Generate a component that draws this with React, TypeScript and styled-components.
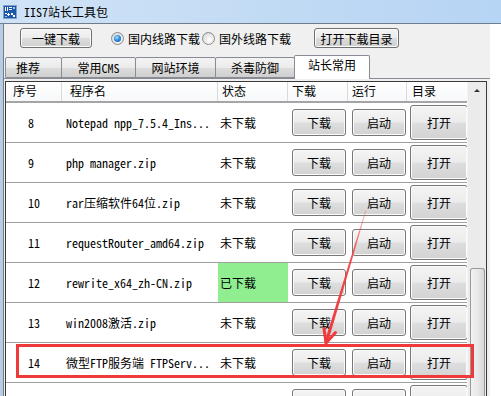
import React from 'react';
import styled, { createGlobalStyle } from 'styled-components';

const GlobalStyle = createGlobalStyle`
  html, body {
    margin: 0;
    padding: 0;
    background: #ffffff;
  }
  body {
    font-family: "Noto Sans Mono CJK SC", "Noto Sans CJK SC", "Liberation Mono", monospace;
    font-size: 12px;
    color: #000;
  }
  #root {
    width: 501px;
    height: 396px;
    overflow: hidden;
  }
`;

const Window = styled.div`
  position: relative;
  width: 501px;
  height: 396px;
  display: flex;
  flex-direction: column;
  overflow: hidden;
`;

const TitleBar = styled.div`
  height: 23px;
  flex: none;
  display: flex;
  align-items: center;
  gap: 7px;
  padding-left: 3px;
  background: linear-gradient(to right, #d0e3f6 0%, #c4dcf4 45%, #b6d4f4 100%);
  border-bottom: 1px solid #6e7e8e;
`;

const TitleText = styled.span`
  font-size: 12px;
  line-height: 14px;
  color: #000;
`;

const Body = styled.div`
  flex: 1;
  display: flex;
  min-height: 0;
`;

const Frame = styled.div`
  width: 3px;
  flex: none;
  background: #b9cde2;
  border-right: 1px solid #6e7e8e;
`;

const Content = styled.div`
  width: 486px;
  flex: none;
  background: #f0f0f0;
  padding-top: 4px;
  display: flex;
  flex-direction: column;
  min-height: 0;
`;

const Outside = styled.div`
  flex: 1;
  background: #ffffff;
`;

const Controls = styled.div`
  height: 20px;
  display: flex;
  align-items: center;
  padding-left: 16px;
  margin-bottom: 7px;
`;

const PushButton = styled.button<{ $w: number; $ml?: number }>`
  width: ${p => p.$w}px;
  height: 20px;
  margin-left: ${p => p.$ml ?? 0}px;
  padding: 0;
  font: inherit;
  color: #000;
  border: 1px solid #707070;
  border-radius: 3px;
  background: linear-gradient(#f4f4f4 0%, #ececec 48%, #dcdcdc 52%, #d0d0d0 100%);
  box-shadow: inset 0 0 0 1px #fbfbfb;
  display: flex;
  align-items: center;
  justify-content: center;
`;

const RadioLabel = styled.label<{ $ml: number }>`
  display: flex;
  align-items: center;
  gap: 4px;
  margin-left: ${p => p.$ml}px;
`;

const RadioDot = styled.span<{ $on?: boolean }>`
  width: 13px;
  height: 13px;
  box-sizing: border-box;
  border-radius: 50%;
  border: 1px solid #8a8a8a;
  background: radial-gradient(circle at 60% 65%, #ffffff 0%, #e6e6e6 55%, #cfcfcf 100%);
  display: flex;
  align-items: center;
  justify-content: center;
  &::after {
    content: '';
    display: ${p => (p.$on ? 'block' : 'none')};
    width: 7px;
    height: 7px;
    border-radius: 50%;
    background: radial-gradient(circle at 40% 35%, #a9e3ff 0%, #2f8ee0 45%, #0c4f9e 100%);
  }
`;

const TabStrip = styled.div`
  height: 23px;
  display: flex;
  align-items: flex-end;
  padding-left: 1px;
`;

const Tab = styled.div<{ $active?: boolean; $w: number; $left?: boolean }>`
  box-sizing: border-box;
  width: ${p => p.$w}px;
  flex: none;
  height: ${p => (p.$active ? 24 : 21)}px;
  margin-bottom: ${p => (p.$active ? -1 : 0)}px;
  margin-left: -1px;
  padding: ${p => (p.$active ? '2px 0 0' : '3px 0 0')};
  padding-left: ${p => (p.$left ? 10 : 0)}px;
  text-align: ${p => (p.$left ? 'left' : 'center')};
  border: 1px solid #898c95;
  border-bottom: ${p => (p.$active ? 'none' : '1px solid #898c95')};
  border-radius: 2px 2px 0 0;
  position: relative;
  z-index: ${p => (p.$active ? 1 : 0)};
  background: ${p =>
    p.$active ? '#ffffff' : 'linear-gradient(#f3f3f3 0%, #ebebeb 50%, #dddddd 52%, #cfcfcf 100%)'};
  line-height: 14px;
  white-space: nowrap;
  &:first-child {
    margin-left: 0;
  }
`;

const Panel = styled.div`
  flex: 1;
  min-height: 0;
  border-top: 1px solid #898c95;
  padding-top: 2px;
  display: flex;
  flex-direction: column;
`;

const Table = styled.div`
  flex: 1;
  min-height: 0;
  width: 482px;
  box-sizing: border-box;
  margin-left: 1px;
  border: 1px solid #3a3a3a;
  border-bottom: none;
  background: #ffffff;
  display: flex;
  overflow: hidden;
`;

const GridArea = styled.div`
  width: 462px;
  display: flex;
  flex-direction: column;
  overflow: hidden;
`;

const COLS = '56px 156px 70px 60px 59px 61px';

const HeaderRow = styled.div`
  display: grid;
  grid-template-columns: ${COLS};
  height: 19px;
  flex: none;
  border-bottom: 2px solid #a5a5a5;
  background: linear-gradient(#ffffff 0%, #f7f8fa 100%);
`;

const HeadCell = styled.div<{ $pad: number }>`
  padding-left: ${p => p.$pad}px;
  line-height: 18px;
  border-right: 1px solid #dadada;
  white-space: nowrap;
`;

const Row = styled.div`
  display: grid;
  grid-template-columns: ${COLS};
  height: 40px;
  flex: none;
  box-sizing: border-box;
  border-bottom: 1px solid #a0a0a0;
`;

const Cell = styled.div<{ $pad?: number; $done?: boolean }>`
  display: flex;
  align-items: center;
  padding-left: ${p => p.$pad ?? 0}px;
  background: ${p => (p.$done ? '#90ee90' : 'transparent')};
  white-space: nowrap;
  overflow: hidden;
`;

const RowButton = styled.div<{ $big?: boolean }>`
  box-sizing: border-box;
  width: ${p => (p.$big ? 58 : 54)}px;
  height: ${p => (p.$big ? 35 : 27)}px;
  border: 1px solid #777777;
  border-radius: 3px;
  background: linear-gradient(#f4f4f4 0%, #ececec 48%, #dedede 52%, #d2d2d2 100%);
  box-shadow: inset 0 0 0 1px #fbfbfb;
  display: flex;
  align-items: center;
  justify-content: center;
`;

const Scrollbar = styled.div`
  width: 18px;
  flex: none;
  background: #ebebeb;
  border-left: 1px solid #f4f4f4;
  display: flex;
  flex-direction: column;
  align-items: center;
`;

const ArrowUp = styled.div`
  height: 17px;
  display: flex;
  align-items: center;
  justify-content: center;
  &::after {
    content: '';
    border-left: 3px solid transparent;
    border-right: 3px solid transparent;
    border-bottom: 3px solid #333;
  }
`;

const Thumb = styled.div`
  margin-top: 169px;
  flex: 1;
  width: 15px;
  box-sizing: border-box;
  border: 1px solid #9a9a9a;
  border-bottom: none;
  border-radius: 3px 3px 0 0;
  background: linear-gradient(to right, #f2f2f2 0%, #e8e8e8 50%, #d8d8d8 100%);
`;

const Overlay = styled.svg`
  position: absolute;
  left: 0;
  top: 0;
  pointer-events: none;
`;

type Item = { no: string; name: string; status: string; done?: boolean };

const items: Item[] = [
  { no: '8', name: 'Notepad npp_7.5.4_Ins...', status: '未下载' },
  { no: '9', name: 'php manager.zip', status: '未下载' },
  { no: '10', name: 'rar压缩软件64位.zip', status: '未下载' },
  { no: '11', name: 'requestRouter_amd64.zip', status: '未下载' },
  { no: '12', name: 'rewrite_x64_zh-CN.zip', status: '已下载', done: true },
  { no: '13', name: 'win2008激活.zip', status: '未下载' },
  { no: '14', name: '微型FTP服务端 FTPServ...', status: '未下载' },
];

const tabs = [
  { label: '推荐', w: 57 },
  { label: '常用CMS', w: 75 },
  { label: '网站环境', w: 81 },
  { label: '杀毒防御', w: 80 },
  { label: '站长常用', w: 76 },
];

function AppIcon() {
  return (
    <svg width="14" height="14" viewBox="0 0 14 14">
      <rect x="0.5" y="0.5" width="13" height="13" fill="#1d58a6" stroke="#7fa1cf" />
      <rect x="2" y="2" width="1" height="4" fill="#fff" />
      <rect x="4" y="2" width="1" height="4" fill="#fff" />
      <rect x="6" y="2" width="3" height="1" fill="#fff" />
      <rect x="6" y="4" width="3" height="1" fill="#fff" />
      <rect x="10" y="2" width="2" height="2" fill="#9fc3ef" />
      <rect x="2" y="8" width="2" height="1" fill="#fff" />
      <rect x="5" y="8" width="1" height="3" fill="#fff" />
      <rect x="4" y="9" width="3" height="1" fill="#fff" />
      <rect x="8" y="8" width="2" height="2" fill="#fff" />
      <rect x="10" y="10" width="2" height="2" fill="#fff" />
      <rect x="2" y="11" width="2" height="1" fill="#9fc3ef" />
    </svg>
  );
}

function Annotations() {
  return (
    <Overlay width="501" height="396" viewBox="0 0 501 396">
      <defs>
        <linearGradient id="fade" x1="366" y1="210" x2="326" y2="343" gradientUnits="userSpaceOnUse">
          <stop offset="0" stopColor="#f0393b" stopOpacity="0.25" />
          <stop offset="0.35" stopColor="#f0393b" stopOpacity="0.9" />
          <stop offset="1" stopColor="#f0393b" stopOpacity="1" />
        </linearGradient>
      </defs>
      <polygon points="366.5,210.1 365.5,209.9 324.4,342.5 327.6,343.4" fill="url(#fade)" />
      <polyline
        points="324,328.5 326,343 335.5,332.5"
        fill="none"
        stroke="#f0393b"
        strokeWidth="3"
        strokeLinecap="round"
        strokeLinejoin="round"
      />
      <rect x="17.5" y="345.5" width="455" height="31" fill="none" stroke="#f0393b" strokeWidth="3" />
    </Overlay>
  );
}

export default function App() {
  return (
    <>
      <GlobalStyle />
      <Window>
        <TitleBar>
          <AppIcon />
          <TitleText>IIS7站长工具包</TitleText>
        </TitleBar>
        <Body>
          <Frame />
          <Content>
            <Controls>
              <PushButton $w={72}>一键下载</PushButton>
              <RadioLabel $ml={19}>
                <RadioDot $on />
                国内线路下载
              </RadioLabel>
              <RadioLabel $ml={2}>
                <RadioDot />
                国外线路下载
              </RadioLabel>
              <PushButton $w={85} $ml={23}>打开下载目录</PushButton>
            </Controls>
            <TabStrip>
              {tabs.map((t, i) => (
                <Tab key={t.label} $w={t.w} $left={i === 0} $active={i === tabs.length - 1}>
                  {t.label}
                </Tab>
              ))}
            </TabStrip>
            <Panel>
              <Table>
                <GridArea>
                  <HeaderRow>
                    <HeadCell $pad={7}>序号</HeadCell>
                    <HeadCell $pad={8}>程序名</HeadCell>
                    <HeadCell $pad={4}>状态</HeadCell>
                    <HeadCell $pad={4}>下载</HeadCell>
                    <HeadCell $pad={4}>运行</HeadCell>
                    <HeadCell $pad={5}>目录</HeadCell>
                  </HeaderRow>
                  {items.map(it => (
                    <Row key={it.no}>
                      <Cell $pad={22}>{it.no}</Cell>
                      <Cell $pad={4}>{it.name}</Cell>
                      <Cell $pad={2} $done={it.done}>{it.status}</Cell>
                      <Cell $pad={4}><RowButton>下载</RowButton></Cell>
                      <Cell $pad={4}><RowButton>启动</RowButton></Cell>
                      <Cell $pad={3}><RowButton $big>打开</RowButton></Cell>
                    </Row>
                  ))}
                  {/* next row is scrolled mostly out of view: only the button tops show */}
                  <Row>
                    <Cell />
                    <Cell />
                    <Cell />
                    <Cell $pad={4}><RowButton /></Cell>
                    <Cell $pad={4}><RowButton /></Cell>
                    <Cell $pad={3}><RowButton $big /></Cell>
                  </Row>
                </GridArea>
                <Scrollbar>
                  <ArrowUp />
                  <Thumb />
                </Scrollbar>
              </Table>
            </Panel>
          </Content>
          <Outside />
        </Body>
        <Annotations />
      </Window>
    </>
  );
}
